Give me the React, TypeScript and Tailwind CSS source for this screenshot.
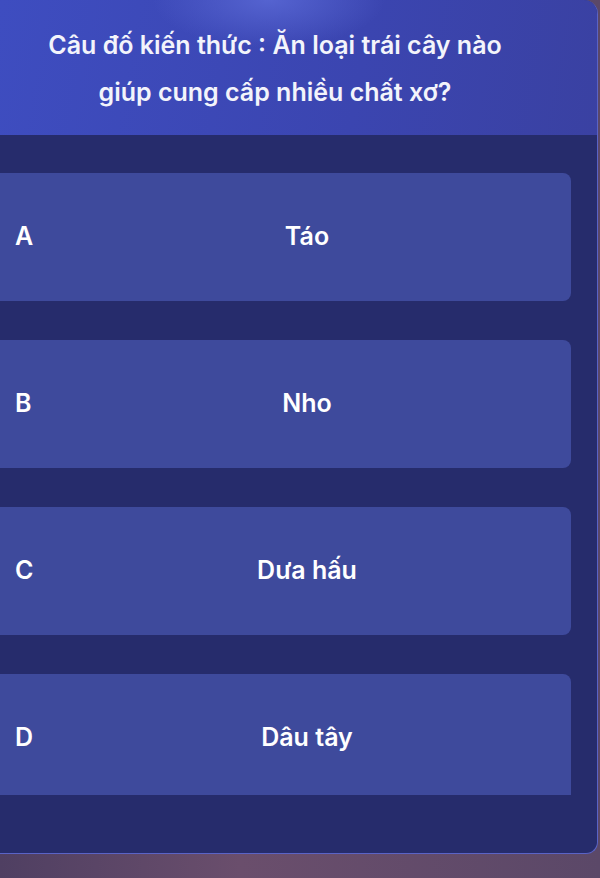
const options = [
  { key: "A", text: "Táo" },
  { key: "B", text: "Nho" },
  { key: "C", text: "Dưa hấu" },
  { key: "D", text: "Dâu tây" },
];

export default function App() {
  return (
    <div
      className="flex h-[878px] w-[600px] flex-col overflow-hidden bg-[linear-gradient(90deg,#4f3f62,#6a4e6c_40%,#5b4868)] text-white"
      style={{ fontFamily: "Inter, 'Noto Sans', sans-serif" }}
    >
      <div className="flex h-[854px] w-[598px] shrink-0 flex-col overflow-hidden rounded-tr-[14px] rounded-br-[12px] border-r border-b border-[#5a63c6] bg-[#262c6c]">
        <header className="flex h-[135px] shrink-0 items-center bg-[radial-gradient(ellipse_at_45%_0%,#5563d0_0%,transparent_25%),linear-gradient(100deg,#3e4dc0,#3b45b0_60%,#3a41a2)]">
          <h1 className="ml-[25px] w-[500px] pt-[2px] text-center text-[25px] font-semibold leading-[47px] text-[#f3f4fb]">
            Câu đố kiến thức : Ăn loại trái cây nào giúp cung cấp nhiều chất xơ?
          </h1>
        </header>

        <div className="flex h-[660px] shrink-0 flex-col gap-[39px] overflow-hidden pt-[38px]">
          {options.map((o) => (
            <button
              key={o.key}
              className="flex h-[128px] w-[571px] shrink-0 items-center rounded-r-lg bg-[#3e4a9c] pl-[15px] text-[25px] font-semibold text-white"
            >
              <span className="w-[28px] text-left">{o.key}</span>
              <span className="flex-1 text-center">{o.text}</span>
            </button>
          ))}
        </div>
      </div>
    </div>
  );
}
